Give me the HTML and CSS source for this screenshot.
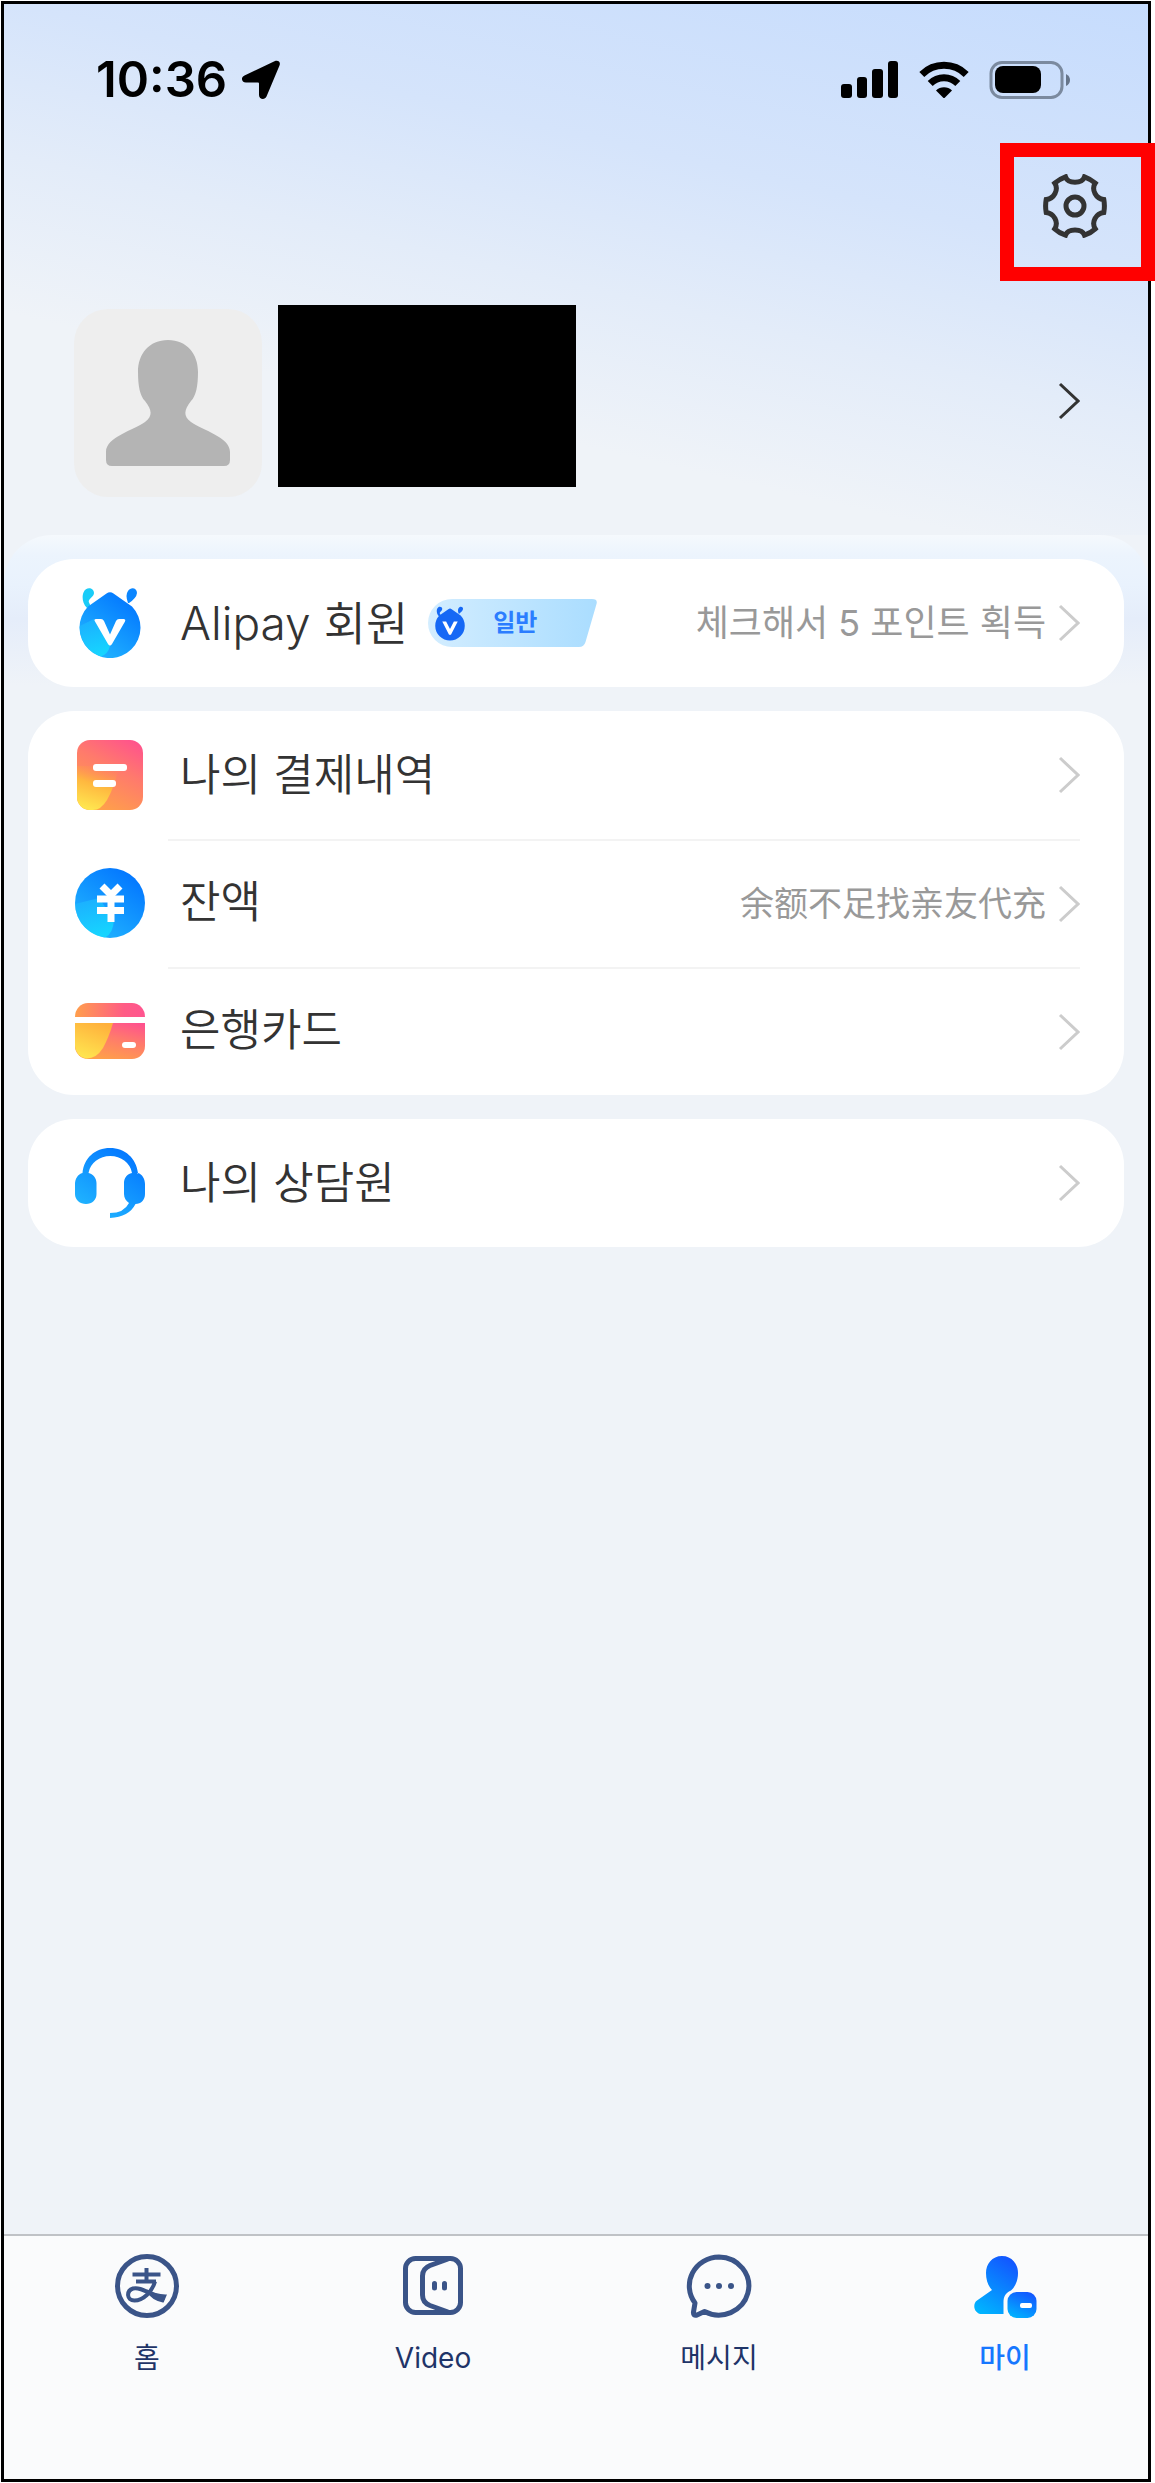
FILE: index.html
```html
<!DOCTYPE html>
<html lang="ko">
<head>
<meta charset="utf-8">
<meta name="viewport" content="width=device-width, initial-scale=1">
<title>Alipay</title>
<link rel="stylesheet" href="styles.css">
</head>
<body>
<svg class="defs" width="0" height="0" aria-hidden="true">
  <defs>
    <linearGradient id="blue" x1="0.9" y1="0" x2="0.2" y2="1"><stop offset="0" stop-color="#0070ff"/><stop offset="1" stop-color="#22b8ff"/></linearGradient>
    <linearGradient id="cyan" x1="0" y1="0" x2="0.5" y2="1"><stop offset="0" stop-color="#1fb0ff"/><stop offset="1" stop-color="#13e4ff"/></linearGradient>
    <linearGradient id="warm" x1="0.9" y1="0" x2="0.4" y2="1"><stop offset="0" stop-color="#ff518e"/><stop offset="0.45" stop-color="#ff7a6c"/><stop offset="1" stop-color="#ffa04a"/></linearGradient>
    <linearGradient id="gold" x1="0.7" y1="0" x2="0.4" y2="1"><stop offset="0" stop-color="#ff8a55" stop-opacity="0"/><stop offset="0.45" stop-color="#ffb73f"/><stop offset="1" stop-color="#ffe54f"/></linearGradient>
    <linearGradient id="goldcard" x1="0.7" y1="0" x2="0.3" y2="1"><stop offset="0" stop-color="#ffb03c"/><stop offset="1" stop-color="#ffe54f"/></linearGradient>
    <linearGradient id="cardtop" x1="0" y1="0" x2="1" y2="0"><stop offset="0" stop-color="#ff9f4c"/><stop offset="0.7" stop-color="#ff5c85"/><stop offset="1" stop-color="#ff5590"/></linearGradient>
    <linearGradient id="me" x1="0.7" y1="0" x2="0.2" y2="1"><stop offset="0" stop-color="#1257ff"/><stop offset="1" stop-color="#00b4ff"/></linearGradient>
    <linearGradient id="pill" x1="0" y1="0" x2="1" y2="0"><stop offset="0" stop-color="#d3edff"/><stop offset="1" stop-color="#aaddff"/></linearGradient>
    <symbol id="chevron" viewBox="0 0 22 38"><path d="M2 2 20 19 2 36" fill="none" stroke="currentColor" stroke-width="3"/></symbol>
  </defs>
</svg>
<div class="phone">
  <header class="hero">
    <div class="status">
      <div class="status-left">
        <time class="clock">10:36</time>
        <svg width="40" height="40" viewBox="0 0 40 40" aria-hidden="true"><path d="M33.500 1.300C37 -.3 40 2 38.500 5.500L25.500 36.500C24 40.200 18 39.500 18 35V23.500Q18 22.500 17 22.500H5C.5 22.500-.6 17.500 3.500 15.500Z" /></svg>
      </div>
      <div class="status-right">
        <svg width="58" height="38" viewBox="0 0 58 38" aria-hidden="true"><rect y="23" width="11" height="14" rx="3"/><rect x="16" y="16" width="10" height="21" rx="3"/><rect x="31" y="8" width="11" height="29" rx="3"/><rect x="47" width="10" height="37" rx="3"/></svg>
        <svg width="50" height="38" viewBox="0 0 50 38" aria-hidden="true"><g fill="none" stroke="#000" stroke-width="7"><path d="M2.800 13.500A31.500 31.500 0 0 1 47.200 13.500"/><path d="M11.200 22.500A19.500 19.500 0 0 1 38.800 22.500"/></g><path d="M17 29.500A11.500 11.500 0 0 1 33 29.500L26 36.500Q25 37.500 24 36.500Z"/></svg>
        <svg width="82" height="38" viewBox="0 0 82 38" aria-hidden="true"><rect x="2" y="1.500" width="71" height="35" rx="11" fill="none" stroke="#7b8a9f" stroke-width="3"/><rect x="6" y="5" width="46" height="27" rx="8"/><path d="M77 13Q81 15 81 19T77 25Z" fill="#66758a"/></svg>
      </div>
    </div>
    <div class="toolbar">
      <button class="settings" type="button" aria-label="설정">
        <svg width="64" height="64" viewBox="0 0 64 64" fill="none" stroke="#333" stroke-width="5" aria-hidden="true"><circle cx="32" cy="32" r="9"/><path d="M22.500 2.800C25 10.200 39 10.200 41.500 2.800Q47.500 5 52.300 9.200C48 15.500 53 25 60.800 25.500Q62 32 60.800 38.500C53 39.500 48 48 52.300 54.800Q47.500 59.200 41.500 61.200C39 54.400 25 54.400 22.500 61.200Q16.500 59.200 11.700 54.800C16 48 11 39.500 3.200 38.500Q2 32 3.200 25.500C11 25 16 15.500 11.700 9.200Q16.500 5 22.500 2.800Z"/></svg>
        <span class="highlight"></span>
      </button>
    </div>
    <a class="profile" href="#profile" aria-label="프로필">
      <span class="avatar">
        <svg width="126" height="126" viewBox="0 0 126 126" aria-hidden="true"><path d="M63 0C82 0 93 14 93 32C93 46 91 56 86 61C79 70 78 76 86 82C97 90 125 97 125 112V120Q125 126 119 126H7Q1 126 1 120V112C1 97 29 90 40 82C48 76 47 70 40 61C35 56 33 46 33 32C33 14 44 0 63 0Z" fill="#b4b4b4"/></svg>
      </span>
      <span class="redacted"></span>
      <svg class="chevron" aria-hidden="true"><use href="#chevron"/></svg>
    </a>
  </header>

  <main class="content">
    <div class="card">
      <a class="row member" href="#member">
        <span class="icon">
          <svg width="62" height="70" viewBox="0 0 62 70" aria-hidden="true">
            <path d="M8 20C3 15 3 8 4.500 4.500C7-2 15-.5 15 5C15 9 9 11 9.800 14Q10.500 17 13 18Z" fill="#19ccf8"/>
            <path d="M49 15Q46 7 49 3C52-1.500 58 0 58 5Q57.500 10 50 15Z" fill="#0b86ff"/>
            <path d="M27.500 5.500Q31 2.800 34.500 5.500L53 18.500A30.500 30.500 0 1 1 9 18.500Z" fill="url(#blue)"/>
            <path d="M.8 38A30.500 30.500 0 0 0 22 68.500Q29 66 31 58L15 31Z" fill="url(#cyan)" opacity="0.7"/>
            <path d="M17 31H22Q24 31 25 33L31 46.500 37 33Q38 31 40 31H44.500Q47 31 46 33.500L33 56Q31 59 29 56L16 33.500Q14.500 31 17 31Z" fill="#fff"/>
          </svg>
        </span>
        <span class="body">
          <span class="label">Alipay 회원</span>
          <span class="badge">
            <svg class="badge-shape" width="169" height="48" viewBox="0 0 169 48" aria-hidden="true"><path d="M24 0H164Q170 0 168.500 5L157.500 43Q156 48 151 48H24A24 24 0 0 1 24 0Z" fill="url(#pill)"/></svg>
            <svg class="badge-icon" width="30" height="35" viewBox="0 0 62 70" aria-hidden="true"><g fill="#1668f5"><path d="M8 20C3 15 3 8 4.500 4.500C7-2 15-.5 15 5C15 9 9 11 9.800 14Q10.500 17 13 18Z"/><path d="M49 15Q46 7 49 3C52-1.500 58 0 58 5Q57.500 10 50 15Z"/><path d="M27.500 5.500Q31 2.800 34.500 5.500L53 18.500A30.500 30.500 0 1 1 9 18.500Z"/></g><path d="M15 31H23L31 46.500 39 31H47L33 58H29Z" fill="#fff"/></svg>
            <span class="badge-text">일반</span>
          </span>
          <span class="detail">체크해서 5 포인트 획득</span>
          <svg class="chevron" aria-hidden="true"><use href="#chevron"/></svg>
        </span>
      </a>
    </div>

    <div class="card">
      <a class="row" href="#payments">
        <span class="icon">
          <svg width="66" height="70" viewBox="0 0 66 70" aria-hidden="true"><rect width="66" height="70" rx="13" fill="url(#warm)"/><path d="M0 26L42 26Q38 46 30 60Q24 70 16 70H13A13 13 0 0 1 0 57Z" fill="url(#gold)"/><rect x="16" y="24" width="34" height="7" rx="3" fill="#fff"/><rect x="16" y="40" width="23" height="7" rx="3" fill="#fff"/></svg>
        </span>
        <span class="body">
          <span class="label">나의 결제내역</span>
          <svg class="chevron" aria-hidden="true"><use href="#chevron"/></svg>
        </span>
      </a>
      <a class="row" href="#balance">
        <span class="icon">
          <svg width="70" height="70" viewBox="0 0 70 70" aria-hidden="true"><circle cx="35" cy="35" r="35" fill="url(#blue)"/><path d="M0 36A35 35 0 0 0 30 69.600Q38 66 39 52L24 30Z" fill="url(#cyan)" opacity="0.7"/><g fill="none" stroke="#fff" stroke-width="7"><path d="M27 18 36 27 45 18" /><path d="M22 31H49M22 42.500H49M36 27V54"/></g></svg>
        </span>
        <span class="body">
          <span class="label">잔액</span>
          <span class="detail" lang="zh">余额不足找亲友代充</span>
          <svg class="chevron" aria-hidden="true"><use href="#chevron"/></svg>
        </span>
      </a>
      <a class="row" href="#cards">
        <span class="icon">
          <svg width="70" height="56" viewBox="0 0 70 56" aria-hidden="true"><path d="M0 14A13 14 0 0 1 13 0H57A13 14 0 0 1 70 14Z" fill="url(#cardtop)"/><path d="M0 20H70V43A13 13 0 0 1 57 56H13A13 13 0 0 1 0 43Z" fill="url(#warm)"/><path d="M0 20H38Q34 34 28 45Q21 56 11 55.500A13 13 0 0 1 0 43Z" fill="url(#goldcard)"/><rect x="47" y="39" width="14" height="6" rx="3" fill="#fff"/></svg>
        </span>
        <span class="body">
          <span class="label">은행카드</span>
          <svg class="chevron" aria-hidden="true"><use href="#chevron"/></svg>
        </span>
      </a>
    </div>

    <div class="card">
      <a class="row" href="#support">
        <span class="icon">
          <svg width="70" height="70" viewBox="0 0 70 70" aria-hidden="true"><path d="M8 26A27.500 25 0 0 1 62.500 26L63 25C67 26 70 31 70 36V46C70 52 66 56 60.500 56Q54 69 35 70V65Q49 65 54 55C51 53 49 50 49 46V35C49 30 52 26 57 25A22 20 0 0 0 13.500 25C18 26 21.500 30 21.500 35V46C21.500 52 17 56 11 56C5 56 0 52 0 46V36C0 31 3 26 7.500 25C9 10 20 0 35 0S61 10 63 25L57 25C55 13 46 5.500 35 5.500S15 13 13.500 25Z" fill="url(#blue)"/></svg>
        </span>
        <span class="body">
          <span class="label">나의 상담원</span>
          <svg class="chevron" aria-hidden="true"><use href="#chevron"/></svg>
        </span>
      </a>
    </div>
  </main>

  <nav class="tabs">
    <a class="tab" href="#home">
      <svg width="64" height="64" viewBox="0 0 64 64" fill="none" stroke="#3a5488" aria-hidden="true"><circle cx="32" cy="32" r="29.500" stroke-width="5"/><g stroke-width="4"><path d="M17.500 20.500H45.500M21 27.500H41M31.500 14V27"/><path d="M40 27.500C37 38 28 46.500 19.500 46.500C11.500 46.500 11 37 18 34.500C27 32 37 43 50 43.500"/></g><path d="M31.500 36.500Q40 41 50.500 41.500L48 47.500Q38 46 31.500 36.500Z" fill="#3a5488" stroke-width="2"/></svg>
      <span>홈</span>
    </a>
    <a class="tab" href="#video">
      <svg width="64" height="64" viewBox="0 0 64 64" fill="none" stroke="#3a5488" stroke-width="5" stroke-linejoin="round" aria-hidden="true"><rect x="4.500" y="4.500" width="55" height="54" rx="10"/><path d="M47 5 29 11.500Q21.500 14.500 21.500 22V41Q21.500 48.500 29 51.500L47 58"/><path d="M33.500 29.500V34M43.500 29.500V34" stroke-linecap="round"/></svg>
      <span>Video</span>
    </a>
    <a class="tab" href="#messages">
      <svg width="66" height="64" viewBox="0 0 66 64" fill="none" stroke="#3a5488" stroke-width="5" stroke-linejoin="round" aria-hidden="true"><path d="M33 3A30 29 0 1 1 18.500 57.500L11 61Q7 62 7.500 58L9 49A30 29 0 0 1 33 3Z"/><g fill="#3a5488" stroke="none"><circle cx="21.500" cy="32" r="3"/><circle cx="33" cy="32" r="3"/><circle cx="45" cy="32" r="3"/></g></svg>
      <span>메시지</span>
    </a>
    <a class="tab current" href="#me" aria-current="page">
      <svg width="64" height="64" viewBox="0 0 64 64" aria-hidden="true"><path d="M29 2C39 2 45 10 45 19C45 27 42 33 38 36.500C32 39 30.500 43 30.500 49V60H9C1 60 -1 50 4 46.500L19 36C15 32 13 26 13 19C13 10 19 2 29 2Z" fill="url(#me)"/><rect x="34.500" y="38" width="29" height="26" rx="9" fill="url(#me)"/><rect x="47" y="49" width="12" height="5" rx="2" fill="#fff"/></svg>
      <span>마이</span>
    </a>
  </nav>
</div>
</body>
</html>
```
FILE: styles.css
```css
* {
  box-sizing: border-box;
}

body {
  margin: 0;
  padding: 1px 4px 1px 1px;
  background: #fff;
  color: #333;
  font-family: Inter, "Noto Sans CJK KR", "Noto Sans CJK SC", sans-serif;
}

a {
  color: inherit;
  text-decoration: none;
}

svg {
  display: block;
  flex: none;
}

.defs {
  position: absolute;
}

.phone {
  display: flex;
  flex-direction: column;
  min-height: calc(100vh - 2px);
  border: 3px solid #000;
  background: #eff3f8;
}

/* Top area */

.hero {
  background: linear-gradient(193deg, #c6dcfd 0%, #d5e4fb 33%, #e3ecf9 52%, #eff3f8 72%);
}

.status {
  display: flex;
  align-items: center;
  justify-content: space-between;
  height: 152px;
  padding: 0 77px 0 92px;
}

.status-left,
.status-right {
  display: flex;
  align-items: center;
}

.status-left {
  gap: 14px;
}

.status-right {
  gap: 20px;
}

.clock {
  color: #000;
  font-size: 49px;
  font-weight: 600;
  line-height: 60px;
}

.toolbar {
  display: flex;
  justify-content: flex-end;
  padding: 18px 41px 0;
}

.settings {
  position: relative;
  padding: 0;
  border: 0;
  background: none;
}

.highlight {
  position: absolute;
  inset: -31px -48px -43px -43px;
  border: 14px solid #f00;
}

.profile {
  display: flex;
  align-items: flex-start;
  padding: 67px 68px 38px 70px;
}

.avatar {
  display: flex;
  align-items: center;
  justify-content: center;
  width: 188px;
  height: 188px;
  margin-top: 4px;
  border-radius: 34px;
  background: #eee;
}

.redacted {
  width: 298px;
  height: 182px;
  margin-left: 16px;
  background: #000;
}

.chevron {
  width: 22px;
  height: 38px;
  color: #ccc;
}

.profile .chevron {
  align-self: center;
  margin-left: auto;
  color: #333;
}

/* Menu cards */

.content {
  display: flex;
  flex: 1;
  flex-direction: column;
  gap: 24px;
  padding: 24px;
  border-radius: 48px 48px 0 0;
  background: linear-gradient(#f5f9fd 0, #ecf4fd 20px, #e9f2fd 50px, #e5edfa 84px, #eff3f8 150px);
}

.card {
  border-radius: 46px;
  background: #fff;
}

.row {
  display: flex;
  gap: 20px;
  height: 128px;
  padding: 0 44px;
}

.icon {
  display: flex;
  align-items: center;
  justify-content: center;
  width: 76px;
}

.body {
  display: flex;
  flex: 1;
  align-items: center;
  padding-left: 12px;
}

.row + .row .body {
  border-top: 2px solid #f3f3f3;
}

.label {
  font-size: 44px;
  font-weight: 350;
  line-height: 64px;
}

.row + .row .label {
  padding-bottom: 4px;
}

.member .label {
  font-size: 46px;
}

.detail {
  margin-left: auto;
  color: #999;
  font-size: 36px;
  line-height: 48px;
}

.detail:lang(zh) {
  font-family: Inter, "Noto Sans CJK SC", sans-serif;
  font-size: 34px;
}

.body .chevron {
  margin-left: auto;
}

.detail + .chevron {
  margin-left: 12px;
}

.badge {
  position: relative;
  display: flex;
  align-items: center;
  gap: 28px;
  width: 169px;
  height: 48px;
  margin-left: 20px;
  padding-left: 7px;
}

.badge-shape {
  position: absolute;
  inset: 0;
}

.badge-icon,
.badge-text {
  position: relative;
}

.badge-text {
  color: #2b7dff;
  font-size: 24px;
  font-weight: 700;
  line-height: 32px;
}

/* Bottom tabs */

.tabs {
  display: grid;
  grid-template-columns: repeat(4, 1fr);
  padding: 18px 0 101px;
  border-top: 2px solid #bfc2c6;
  background: #fafbfc;
}

.tab {
  display: flex;
  flex-direction: column;
  align-items: center;
  gap: 20px;
  color: #1f3468;
  font-size: 28px;
  line-height: 40px;
}

.tab.current {
  color: #1677ff;
  font-weight: 500;
}
```
